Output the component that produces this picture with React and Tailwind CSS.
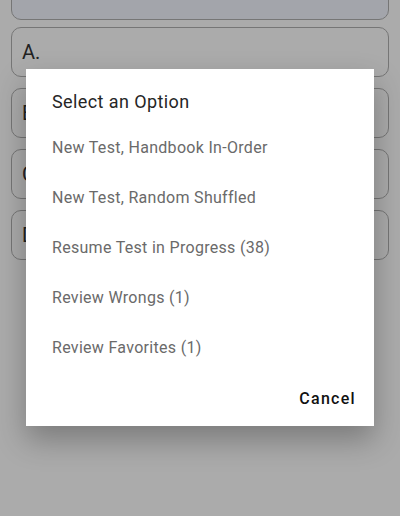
import { useState } from 'react';

const choices = ['A.', 'B.', 'C.', 'D.'];

const options = [
  'New Test, Handbook In-Order',
  'New Test, Random Shuffled',
  'Resume Test in Progress (38)',
  'Review Wrongs (1)',
  'Review Favorites (1)',
];

export default function App() {
  const [open, setOpen] = useState(true);

  return (
    <div className="relative h-[516px] w-[400px] overflow-hidden bg-white font-['Roboto',sans-serif]">
      {/* page behind the dialog */}
      <div className="flex flex-col px-[11px]">
        <div className="-mt-[30px] h-[50px] rounded-[10px] border border-[#b0b0b0] bg-[#f3f7ff]" />
        <div className="mt-[7px] flex flex-col gap-[11px]">
          {choices.map((c) => (
            <div
              key={c}
              className="flex h-[50px] items-center rounded-[10px] border border-[#b0b0b0] bg-[#ffffff] px-[10px] text-[20px] text-[#333]"
            >
              {c}
            </div>
          ))}
        </div>
      </div>

      {open && (
        <div className="absolute inset-0 bg-black/[0.33] px-[26px] pt-[69px]">
          <div className="flex h-[357px] flex-col bg-white shadow-[0_14px_28px_rgba(0,0,0,0.28)]">
            <h2 className="px-[26px] pt-[21px] text-[18px] leading-[24px] tracking-[0.4px] text-[#262626]">
              Select an Option
            </h2>
            <ul className="mt-[9px] flex flex-col">
              {options.map((o) => (
                <li
                  key={o}
                  className="flex h-[50px] items-center px-[26px] text-[16px] tracking-[0.3px] text-[#6a6a6a]"
                >
                  {o}
                </li>
              ))}
            </ul>
            <div className="mt-[8px] flex justify-end pr-[10px]">
              <button
                onClick={() => setOpen(false)}
                className="h-[36px] px-[8px] text-[16px] font-medium tracking-[1.3px] text-[#111]"
              >
                Cancel
              </button>
            </div>
          </div>
        </div>
      )}
    </div>
  );
}
